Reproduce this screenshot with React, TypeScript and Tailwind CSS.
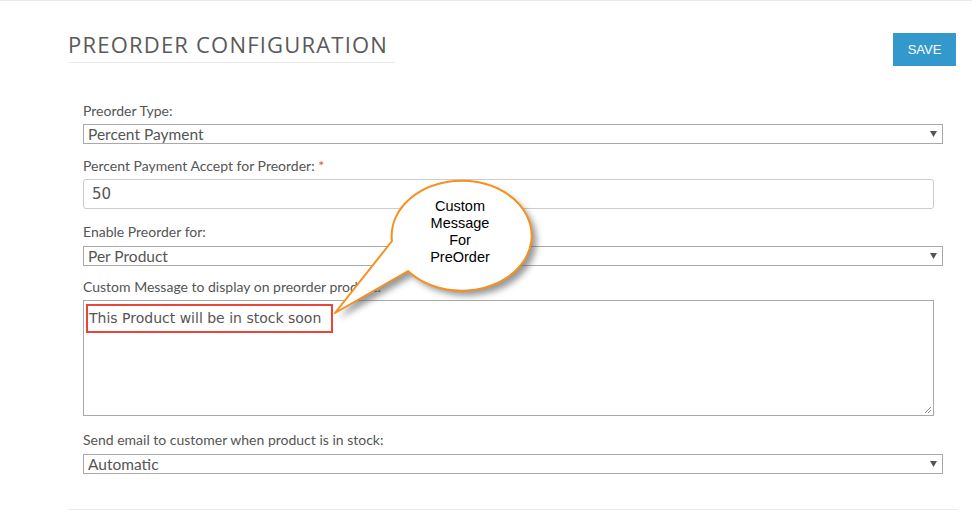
import React from "react";

const labelCls = "block text-[14px] leading-[16px] text-[#555] mb-[5px]";
const labelFont = { fontFamily: "Lato, 'Open Sans', sans-serif" };

function Select({ value, mt }: { value: string; mt?: string }) {
  return (
    <div className={`relative h-[20px] w-[860px] border border-[#a9a9a9] bg-white flex items-center pl-[4px] ${mt ?? ""}`}>
      <span className="text-[15.5px] text-[#555] leading-none pt-[2px]" style={{ fontFamily: "Lato, sans-serif" }}>{value}</span>
      <svg className="absolute right-[5px] top-[6px]" width="7" height="6" viewBox="0 0 7 6">
        <path d="M0 0 H7 L3.5 6 Z" fill="#555" />
      </svg>
    </div>
  );
}

export default function App() {
  return (
    <div className="relative w-[972px] h-[519px] bg-white border-t border-[#ebebeb] overflow-hidden">
      <div className="pl-[68px] pr-[16px] pt-[30px]">
        <div className="flex items-start justify-between">
          <div className="w-[327px] border-b border-[#ebebeb] pb-[4px]">
            <h1 className="text-[22px] leading-[27px] text-[#595959] tracking-[1.2px] font-medium whitespace-nowrap" style={{ fontFamily: "'Open Sans', sans-serif" }}>
              PREORDER CONFIGURATION
            </h1>
          </div>
          <button className="mt-[2px] w-[63px] h-[33px] bg-[#3399cc] text-white text-[13px] flex items-center justify-center" style={{ fontFamily: "Arial, 'Liberation Sans', sans-serif" }}>
            SAVE
          </button>
        </div>

        <div className="pl-[15px] pt-[37px]" style={labelFont}>
          <label className={labelCls} style={labelFont}>Preorder Type:</label>
          <Select value="Percent Payment" />

          <label className={`${labelCls} mt-[14px] mb-[5px]`} style={labelFont}>
            Percent Payment Accept for Preorder: <span className="text-[#e84c3d]">*</span>
          </label>
          <div className="h-[30px] w-[851px] border border-[#ccc] rounded-[3px] flex items-center pl-[8px]">
            <span className="text-[15px] text-[#555]" style={{ fontFamily: "'DejaVu Sans', Verdana, sans-serif" }}>50</span>
          </div>

          <label className={`${labelCls} mt-[15px] mb-[6px]`} style={labelFont}>Enable Preorder for:</label>
          <Select value="Per Product" />

          <label className={`${labelCls} mt-[13px]`} style={labelFont}>Custom Message to display on preorder product:</label>
          <div className="relative h-[116px] w-[851px] border border-[#a9a9a9] bg-white pt-[3px] pl-[2px]">
            <div className="w-[247px] h-[29px] border-2 border-[#e8463c] flex items-center pl-[1px]">
              <span className="text-[14px] text-[#555] whitespace-nowrap" style={{ fontFamily: "'DejaVu Sans', Verdana, sans-serif" }}>This Product will be in stock soon</span>
            </div>
            <svg className="absolute right-[1px] bottom-[1px]" width="9" height="9" viewBox="0 0 9 9">
              <path d="M8 2 L2 8 M8 5 L5 8" stroke="#888" strokeWidth="1" />
            </svg>
          </div>

          <label className={`${labelCls} mt-[16px] mb-[6px]`} style={labelFont}>Send email to customer when product is in stock:</label>
          <Select value="Automatic" />
        </div>

        <div className="mt-[35px] w-[890px] border-t border-[#ebebeb]" />
      </div>

      <svg className="absolute left-0 top-0 pointer-events-none" width="972" height="519" viewBox="0 0 972 519">
        <defs>
          <filter id="sh" x="-30%" y="-30%" width="160%" height="160%">
            <feGaussianBlur stdDeviation="3" />
          </filter>
        </defs>
        <path
          d="M392 240 A70 55 0 1 1 408 270 L335 312 Z"
          fill="#555"
          opacity="0.6"
          filter="url(#sh)"
          transform="translate(5 5)"
        />
        <path
          d="M392 240 A70 55 0 1 1 408 270 L335 312 Z"
          fill="#fff"
          stroke="#f7901e"
          strokeWidth="2"
          strokeLinejoin="round"
        />
        <g fontFamily="Arial, 'Liberation Sans', sans-serif" fontSize="14.5" fill="#000" textAnchor="middle">
          <text x="460" y="210">Custom</text>
          <text x="460" y="227">Message</text>
          <text x="460" y="244">For</text>
          <text x="460" y="261">PreOrder</text>
        </g>
      </svg>
    </div>
  );
}
